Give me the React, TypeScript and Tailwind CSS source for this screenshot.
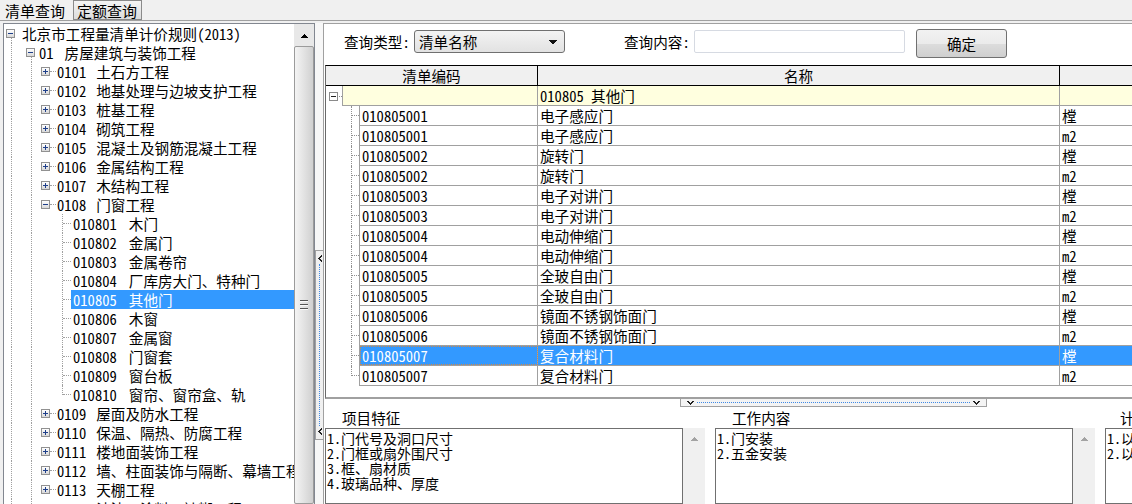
import React from "react";

type Node = { lv: number; code?: string; name: string; exp?: "+" | "-"; sel?: boolean; last?: boolean };

const tree: Node[] = [
  { lv: 0, name: "北京市工程量清单计价规则(2013)", exp: "-" },
  { lv: 1, code: "01", name: "房屋建筑与装饰工程", exp: "-" },
  { lv: 2, code: "0101", name: "土石方工程", exp: "+" },
  { lv: 2, code: "0102", name: "地基处理与边坡支护工程", exp: "+" },
  { lv: 2, code: "0103", name: "桩基工程", exp: "+" },
  { lv: 2, code: "0104", name: "砌筑工程", exp: "+" },
  { lv: 2, code: "0105", name: "混凝土及钢筋混凝土工程", exp: "+" },
  { lv: 2, code: "0106", name: "金属结构工程", exp: "+" },
  { lv: 2, code: "0107", name: "木结构工程", exp: "+" },
  { lv: 2, code: "0108", name: "门窗工程", exp: "-" },
  { lv: 3, code: "010801", name: "木门" },
  { lv: 3, code: "010802", name: "金属门" },
  { lv: 3, code: "010803", name: "金属卷帘" },
  { lv: 3, code: "010804", name: "厂库房大门、特种门" },
  { lv: 3, code: "010805", name: "其他门", sel: true },
  { lv: 3, code: "010806", name: "木窗" },
  { lv: 3, code: "010807", name: "金属窗" },
  { lv: 3, code: "010808", name: "门窗套" },
  { lv: 3, code: "010809", name: "窗台板" },
  { lv: 3, code: "010810", name: "窗帘、窗帘盒、轨", last: true },
  { lv: 2, code: "0109", name: "屋面及防水工程", exp: "+" },
  { lv: 2, code: "0110", name: "保温、隔热、防腐工程", exp: "+" },
  { lv: 2, code: "0111", name: "楼地面装饰工程", exp: "+" },
  { lv: 2, code: "0112", name: "墙、柱面装饰与隔断、幕墙工程", exp: "+" },
  { lv: 2, code: "0113", name: "天棚工程", exp: "+" },
  { lv: 2, code: "0114", name: "油漆、涂料、裱糊工程", exp: "+" },
];

const rows = [
  ["010805001", "电子感应门", "樘"],
  ["010805001", "电子感应门", "m2"],
  ["010805002", "旋转门", "樘"],
  ["010805002", "旋转门", "m2"],
  ["010805003", "电子对讲门", "樘"],
  ["010805003", "电子对讲门", "m2"],
  ["010805004", "电动伸缩门", "樘"],
  ["010805004", "电动伸缩门", "m2"],
  ["010805005", "全玻自由门", "樘"],
  ["010805005", "全玻自由门", "m2"],
  ["010805006", "镜面不锈钢饰面门", "樘"],
  ["010805006", "镜面不锈钢饰面门", "m2"],
  ["010805007", "复合材料门", "樘"],
  ["010805007", "复合材料门", "m2"],
];

function ExpBox({ open }: { open: boolean }) {
  return (
    <span className="flex h-[9px] w-[9px] shrink-0 items-center justify-center border border-[#919191] bg-linear-to-b from-white to-[#d8d8d8]">
      <svg width="7" height="7" viewBox="0 0 7 7" shapeRendering="crispEdges">
        <rect x="1" y="3" width="5" height="1" fill="#1e3f8a" />
        {!open && <rect x="3" y="1" width="1" height="5" fill="#1e3f8a" />}
      </svg>
    </span>
  );
}

function UpArrow({ color = "#000" }: { color?: string }) {
  return (
    <svg width="7" height="4" viewBox="0 0 7 4" shapeRendering="crispEdges">
      <path d="M3 0h1v1h1v1h1v1h1v1H0V3h1V2h1V1h1z" fill={color} />
    </svg>
  );
}

function TreeRow({ n, i }: { n: Node; i: number }) {
  return (
    <div className="relative flex h-[19px] items-center whitespace-nowrap">
      <span
        className={
          i === 0
            ? "absolute left-[7px] top-[10px] bottom-0 border-l border-dotted border-[#a0a0a0]"
            : "absolute left-[7px] inset-y-0 border-l border-dotted border-[#a0a0a0]"
        }
      />
      {i >= 1 && (
        <span
          className={
            i === 1
              ? "absolute left-[27px] top-[10px] bottom-0 border-l border-dotted border-[#a0a0a0]"
              : "absolute left-[27px] inset-y-0 border-l border-dotted border-[#a0a0a0]"
          }
        />
      )}
      {n.lv === 3 && (
        <>
          <span
            className={
              n.last
                ? "absolute left-[58px] top-0 h-[10px] border-l border-dotted border-[#a0a0a0]"
                : "absolute left-[58px] inset-y-0 border-l border-dotted border-[#a0a0a0]"
            }
          />
          <span className="absolute left-[59px] top-[9px] w-[8px] border-t border-dotted border-[#a0a0a0]" />
        </>
      )}
      {n.lv === 2 && <span className="absolute left-[46px] top-[9px] w-[6px] border-t border-dotted border-[#a0a0a0]" />}

      {n.lv === 0 && (
        <div className="relative flex items-center pl-[2px]">
          <ExpBox open />
          <span className="ml-[7px]">{n.name}</span>
        </div>
      )}
      {n.lv === 1 && (
        <div className="relative flex items-center pl-[22px]">
          <ExpBox open />
          <span className="ml-[4px]">{n.code}</span>
          <span className="ml-[11px]">{n.name}</span>
        </div>
      )}
      {n.lv === 2 && (
        <div className="relative flex items-center pl-[37px]">
          <ExpBox open={n.exp === "-"} />
          <span className="ml-[7px]">{n.code}</span>
          <span className="ml-[10px]">{n.name}</span>
        </div>
      )}
      {n.lv === 3 && (
        <div
          className={
            n.sel
              ? "relative ml-[67px] flex h-full flex-1 items-center bg-[#3399ff] px-[2px] text-white"
              : "relative ml-[67px] flex h-full flex-1 items-center px-[2px]"
          }
        >
          <span>{n.code}</span>
          <span className="ml-[12px]">{n.name}</span>
        </div>
      )}
    </div>
  );
}

function Chevron() {
  return (
    <svg width="7" height="4" viewBox="0 0 7 4" shapeRendering="crispEdges">
      <path d="M0 0h2v1h1v1h1V1h1V0h2v1H6v1H5v1H4v1H3V3H2V2H1V1H0z" fill="#222" />
    </svg>
  );
}

function LeftChevron() {
  return (
    <svg width="4" height="7" viewBox="0 0 4 7" shapeRendering="crispEdges">
      <path d="M3 0h1v2H3v1H2v1h1v1h1v2H3V6H2V5H1V4H0V3h1V2h1V1h1z" fill="#222" />
    </svg>
  );
}

function TextBox({ label, lines, labelPad }: { label: string; lines: string[]; labelPad: string }) {
  return (
    <div className="flex w-[380px] shrink-0 flex-col">
      <div className={`h-[21px] leading-[21px] ${labelPad}`}>{label}</div>
      <div className="flex h-[80px]">
        <div className="w-[358px] overflow-hidden border border-[#707070] bg-white pl-[1px] pt-[2px] text-[14px] leading-[15px]">
          {lines.map((l, k) => (
            <div key={k} className="whitespace-nowrap">
              {l}
            </div>
          ))}
        </div>
        <div className="flex w-[22px] justify-center bg-[#f0f0f0] pt-[9px]">
          <div className="h-[4px]">
            <UpArrow color="#a3a3a3" />
          </div>
        </div>
      </div>
    </div>
  );
}

export default function App() {
  return (
    <div className="flex h-[504px] w-[1132px] flex-col overflow-hidden bg-[#f0f0f0] font-['Noto_Sans_Mono_CJK_SC','Noto_Sans_CJK_SC',sans-serif] text-[14.6px] text-black">
      {/* tabs */}
      <div className="flex h-[21px] shrink-0 items-start border-b border-[#a0a0a0]">
        <div className="h-[20px] w-[70px] pl-[5px] text-[15px] leading-[22px]">清单查询</div>
        <div className="ml-[3px] h-[20px] w-[69px] border border-[#8a8a8a] bg-linear-to-b from-[#f4f4f4] to-[#dcdcdc] pl-[3px] text-[15px] leading-[19px]">
          定额查询
        </div>
      </div>

      <div className="mt-[2px] flex min-h-0 flex-1">
        {/* left tree */}
        <div className="ml-[3px] flex w-[312px] shrink-0 border-l border-t border-r border-[#828790] bg-white">
          <div className="w-[290px] overflow-hidden">
            {tree.map((n, i) => (
              <TreeRow key={i} n={n} i={i} />
            ))}
          </div>
          <div className="flex w-[20px] flex-col bg-[#e8e8e8]">
            <div className="flex h-[22px] items-center justify-center pt-[1px]">
              <UpArrow />
            </div>
            <div className="flex flex-1 justify-center rounded-[2px] border border-[#9b9b9b] bg-[linear-gradient(90deg,#f4f4f4,#e6e6e6_40%,#d0d0d0)] pt-[253px]">
              <div className="flex flex-col gap-[2px]">
                <div className="h-[2px] w-[8px] border-b border-[#fafafa] bg-[#555]" />
                <div className="h-[2px] w-[8px] border-b border-[#fafafa] bg-[#555]" />
                <div className="h-[2px] w-[8px] border-b border-[#fafafa] bg-[#555]" />
              </div>
            </div>
          </div>
        </div>

        {/* vertical splitter */}
        <div className="flex w-[8px] shrink-0 flex-col bg-[#f7f7f7]">
          <div className="mt-[227px] flex h-[190px] flex-col items-center border-y border-l border-[#a0a0a0] bg-[#f0f0f0] py-[4px]">
            <LeftChevron />
            <div className="my-[2px] flex-1 border-l border-dotted border-[#3f8ae6]" />
            <LeftChevron />
          </div>
        </div>

        {/* right panel */}
        <div className="flex min-w-0 flex-1 flex-col border-l border-t border-[#a0a0a0] bg-white">
          {/* toolbar */}
          <div className="flex h-[41px] shrink-0 items-start pl-[20px] pt-[6px] whitespace-nowrap">
            <div className="w-[70px] leading-[23px]">查询类型:</div>
            <div className="flex h-[23px] w-[151px] items-center justify-between rounded-[3px] border border-[#707070] bg-linear-to-b from-[#f3f3f3] to-[#e2e2e2] pl-[4px] pr-[7px]">
              <span>清单名称</span>
              <svg width="8" height="4" viewBox="0 0 8 4" shapeRendering="crispEdges">
                <path d="M0 0h8v1H7v1H6v1H5v1H3V3H2V2H1V1H0z" fill="#111" />
              </svg>
            </div>
            <div className="ml-[59px] w-[70px] leading-[23px]">查询内容:</div>
            <div className="h-[23px] w-[211px] rounded-[2px] border border-[#d6dae2] bg-white" />
            <div className="-mt-[1px] ml-[11px] flex h-[29px] w-[91px] items-center justify-center rounded-[3px] border border-[#707070] bg-[linear-gradient(#f2f2f2,#ebebeb_50%,#dddddd_50%,#cfcfcf)]">
              确定
            </div>
          </div>

          {/* table */}
          <div className="ml-[1px] flex h-[334px] shrink-0 flex-col border-t border-l border-t-black border-l-[#6a6a6a] border-b-2 border-b-[#a0a0a0] whitespace-nowrap">
            <div className="flex h-[20px] shrink-0 border-b border-black bg-[#f0f0f0] leading-[19px]">
              <div className="w-[212px] shrink-0 border-r border-black text-center">清单编码</div>
              <div className="w-[522px] shrink-0 border-r border-black text-center">名称</div>
              <div className="flex-1" />
            </div>
            {/* group row */}
            <div className="flex h-[20px] shrink-0 leading-[19px]">
              <div className="relative flex w-[16px] shrink-0 items-center pl-[3px]">
                <span className="flex h-[9px] w-[9px] items-center justify-center border border-[#8a8a8a] bg-white">
                  <svg width="7" height="7" viewBox="0 0 7 7" shapeRendering="crispEdges">
                    <rect x="1" y="3" width="5" height="1" fill="#222" />
                  </svg>
                </span>
                <span className="ml-px w-[4px] border-t border-dotted border-[#909090]" />
              </div>
              <div className="flex flex-1 border-b border-l border-[#a0a0a0] bg-[#ffffdf]">
                <div className="w-[195px] shrink-0 border-r border-[#a0a0a0]" />
                <div className="w-[522px] shrink-0 border-r border-[#a0a0a0] pl-[2px]">010805 其他门</div>
                <div className="flex-1" />
              </div>
            </div>
            {rows.map((r, k) => {
              const sel = k === 12;
              const last = k === rows.length - 1;
              return (
                <div key={k} className="flex h-[20px] shrink-0 leading-[19px]">
                  <div className="relative w-[33px] shrink-0">
                    <span
                      className={
                        last
                          ? "absolute left-[25px] top-0 h-[10px] border-l border-dotted border-[#909090]"
                          : "absolute left-[25px] inset-y-0 border-l border-dotted border-[#909090]"
                      }
                    />
                    <span className="absolute left-[26px] top-[9px] w-[7px] border-t border-dotted border-[#909090]" />
                  </div>
                  <div
                    className={
                      sel
                        ? "flex flex-1 border-b border-l border-[#a0a0a0] bg-[#3399ff] text-white"
                        : "flex flex-1 border-b border-l border-[#a0a0a0]"
                    }
                  >
                    <div
                      className={
                        sel
                          ? "w-[178px] shrink-0 border-r border-[#a0a0a0] pl-[2px] outline-1 -outline-offset-1 outline-dotted outline-[#d08a4a]"
                          : "w-[178px] shrink-0 border-r border-[#a0a0a0] pl-[2px]"
                      }
                    >
                      {r[0]}
                    </div>
                    <div className="w-[522px] shrink-0 border-r border-[#a0a0a0] pl-[2px]">{r[1]}</div>
                    <div className="flex-1 pl-[2px]">{r[2]}</div>
                  </div>
                </div>
              );
            })}
          </div>

          {/* horizontal splitter */}
          <div className="flex h-[8px] shrink-0">
            <div className="ml-[356px] flex h-[8px] w-[307px] items-center border-x border-b border-[#a0a0a0] bg-[#f4f4f4] px-[6px]">
              <Chevron />
              <div className="mx-[3px] flex-1 border-t border-dotted border-[#3f8ae6]" />
              <Chevron />
            </div>
          </div>

          {/* bottom text boxes */}
          <div className="ml-[1px] flex min-h-0 flex-1 gap-[10px] overflow-hidden">
            <TextBox
              label="项目特征"
              labelPad="pl-[17px]"
              lines={["1.门代号及洞口尺寸", "2.门框或扇外围尺寸", "3.框、扇材质", "4.玻璃品种、厚度"]}
            />
            <TextBox label="工作内容" labelPad="pl-[17px]" lines={["1.门安装", "2.五金安装"]} />
            <TextBox label="计量规则" labelPad="pl-[15px]" lines={["1.以樘计量", "2.以平方米计量"]} />
          </div>
        </div>
      </div>
    </div>
  );
}
